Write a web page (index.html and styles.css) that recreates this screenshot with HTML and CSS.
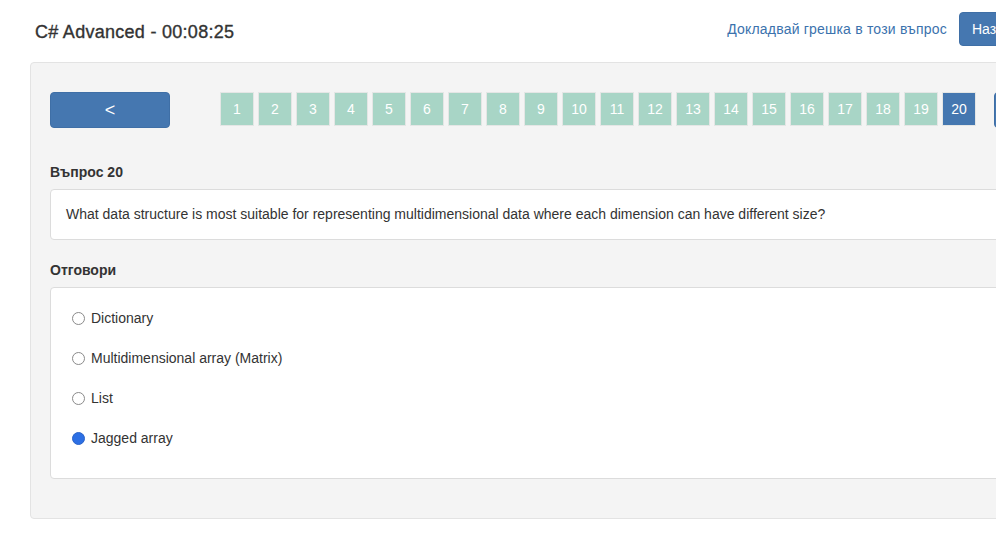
FILE: index.html
```html
<!DOCTYPE html>
<html lang="bg">
<head>
<meta charset="utf-8">
<title>C# Advanced</title>
<link rel="stylesheet" href="styles.css">
</head>
<body>
<div class="page">
  <header class="topbar">
    <h1 class="title">C# Advanced - 00:08:25</h1>
    <div class="actions">
      <a class="report" href="#">Докладвай грешка в този въпрос</a>
      <button class="btn btn-top">Назад</button>
    </div>
  </header>
  <section class="well">
    <nav class="nav-row">
      <button class="btn btn-nav">&lt;</button>
      <ul class="pager">
        <li class="pg">1</li><li class="pg">2</li><li class="pg">3</li><li class="pg">4</li><li class="pg">5</li>
        <li class="pg">6</li><li class="pg">7</li><li class="pg">8</li><li class="pg">9</li><li class="pg">10</li>
        <li class="pg">11</li><li class="pg">12</li><li class="pg">13</li><li class="pg">14</li><li class="pg">15</li>
        <li class="pg">16</li><li class="pg">17</li><li class="pg">18</li><li class="pg">19</li><li class="pg active">20</li>
      </ul>
      <button class="btn btn-nav">&gt;</button>
    </nav>
    <h2 class="label label-q">Въпрос 20</h2>
    <div class="box question">What data structure is most suitable for representing multidimensional data where each dimension can have different size?</div>
    <h2 class="label label-a">Отговори</h2>
    <div class="box answers">
      <label class="answer"><input type="radio" name="a" class="radio"><span>Dictionary</span></label>
      <label class="answer"><input type="radio" name="a" class="radio"><span>Multidimensional array (Matrix)</span></label>
      <label class="answer"><input type="radio" name="a" class="radio"><span>List</span></label>
      <label class="answer"><input type="radio" name="a" class="radio" checked><span>Jagged array</span></label>
    </div>
  </section>
</div>
</body>
</html>
```

FILE: styles.css
```css
* { box-sizing: border-box; }
html, body {
  margin: 0;
  padding: 0;
  background: #fff;
  overflow: hidden;
}
body {
  font-family: "Liberation Sans", Arial, Helvetica, sans-serif;
  font-size: 14px;
  line-height: 20px;
  color: #333;
}
.page {
  width: 1200px;
  padding-left: 30px;
}
.topbar {
  display: flex;
  align-items: center;
  justify-content: space-between;
  width: 1140px;
  padding: 12px 0 0 5px;
  height: 46px;
  margin-bottom: 16px;
}
.title {
  margin: 0;
  padding-top: 5px;
  font-size: 18px;
  font-weight: normal;
  line-height: 24px;
  letter-spacing: 0.28px;
  color: #333;
  -webkit-text-stroke: 0.35px #333;
}
.actions {
  display: flex;
  align-items: center;
  gap: 12px;
  margin-left: auto;
  margin-right: 131px;
}
.report {
  color: #3b72ad;
  text-decoration: none;
  font-size: 14px;
  letter-spacing: 0.2px;
}
.btn {
  border: 1px solid #3f6fa6;
  background: #4577b0;
  color: #fff;
  font-family: inherit;
  font-size: 14px;
  border-radius: 4px;
  cursor: pointer;
  padding: 0;
}
.btn-top {
  height: 34px;
  padding: 0 12px;
  width: 80px;
  text-align: left;
}
.well {
  width: 1140px;
  background: #f4f4f4;
  border: 1px solid #e3e3e3;
  border-radius: 4px;
  padding: 29px 19px 39px;
}
.nav-row {
  display: flex;
  align-items: flex-start;
}
.btn-nav {
  width: 120px;
  height: 36px;
  font-size: 18px;
}
.pager {
  display: flex;
  gap: 4px;
  list-style: none;
  margin: 0 18px 0 50px;
  padding: 0;
}
.pg {
  width: 34px;
  height: 34px;
  display: flex;
  align-items: center;
  justify-content: center;
  background: #a8d5c6;
  border: 1px solid #e4e6e5;
  color: #fff;
  font-size: 14px;
}
.pg.active {
  background: #4577b0;
}
.label {
  margin: 0;
  font-size: 14px;
  font-weight: bold;
  line-height: 20px;
  color: #333;
}
.label-q { margin-top: 34px; margin-bottom: 7px; }
.label-a { margin-top: 20px; margin-bottom: 7px; }
.box {
  background: #fff;
  border: 1px solid #dcdcdc;
  border-radius: 4px;
}
.question {
  padding: 14px 15px 15px;
}
.answers {
  padding: 10px 20px 20px 21px;
}
.answer {
  display: flex;
  align-items: center;
  height: 40px;
}
.radio {
  appearance: none;
  -webkit-appearance: none;
  width: 13px;
  height: 13px;
  margin: 0 6px 0 0;
  border: 1px solid #8a8a8a;
  border-radius: 50%;
  background: #fff;
}
.radio:checked {
  background: #2c6fe4;
  border-color: #2a63c8;
}
```
